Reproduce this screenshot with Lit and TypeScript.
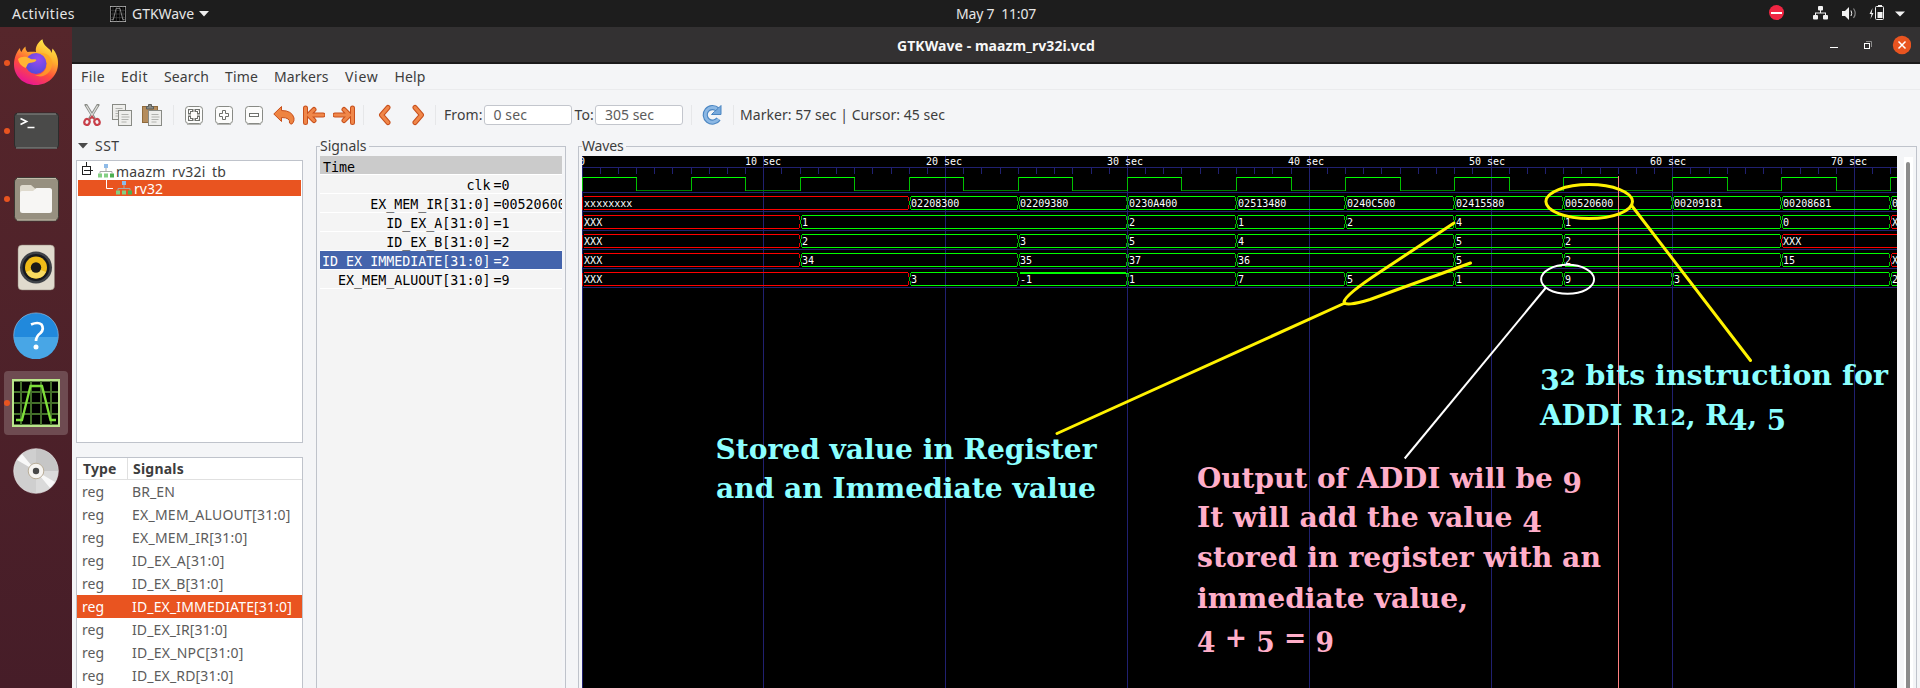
import { LitElement, html, svg, css } from "lit";
import { customElement, property } from "lit/decorators.js";

/* One line of text spread by letter-spacing over a given width. */
@customElement("fit-text")
class FitText extends LitElement {
  @property({ type: Number }) w = 0;
  static styles = css`
    :host { display: inline-block; white-space: pre; flex: none; line-height: 20px; }
    span { display: inline-block; white-space: pre; }
  `;
  firstUpdated() {
    const s = this.renderRoot.querySelector("span") as HTMLElement;
    const n = (this.textContent || "").length;
    if (!this.w || !n) return;
    const natural = s.getBoundingClientRect().width;
    s.style.letterSpacing = (this.w - natural) / n + "px";
  }
  render() { return html`<span><slot></slot></span>`; }
}

const PX = 18.18;
const X0 = 0.5;
const at = (t: number) => Math.floor(t * PX) + X0;

type Seg = [number, string];
const buses: Seg[][] = [
  [[0, "xxxxxxxx"], [18, "02208300"], [24, "02209380"], [30, "0230A400"], [36, "02513480"], [42, "0240C500"], [48, "02415580"], [54, "00520600"], [60, "00209181"], [66, "00208681"], [72, "0"]],
  [[0, "XXX"], [12, "1"], [30, "2"], [36, "1"], [42, "2"], [48, "4"], [54, "1"], [66, "0"], [72, "X"]],
  [[0, "XXX"], [12, "2"], [24, "3"], [30, "5"], [36, "4"], [48, "5"], [54, "2"], [66, "XXX"]],
  [[0, "XXX"], [12, "34"], [24, "35"], [30, "37"], [36, "36"], [48, "5"], [54, "2"], [66, "15"], [72, "X"]],
  [[0, "XXX"], [18, "3"], [24, "-1"], [30, "1"], [36, "7"], [42, "5"], [48, "1"], [54, "9"], [60, "3"], [72, "2"]],
];

const signals: [string, string][] = [
  ["clk", "=0"],
  ["EX_MEM_IR[31:0]", "=00520600"],
  ["ID_EX_A[31:0]", "=1"],
  ["ID_EX_B[31:0]", "=2"],
  ["ID_EX_IMMEDIATE[31:0]", "=2"],
  ["EX_MEM_ALUOUT[31:0]", "=9"],
];

const regs: [string, number][] = [
  ["BR_EN", 43], ["EX_MEM_ALUOUT[31:0]", 158.5], ["EX_MEM_IR[31:0]", 115.5], ["ID_EX_A[31:0]", 92.5],
  ["ID_EX_B[31:0]", 91.5], ["ID_EX_IMMEDIATE[31:0]", 160], ["ID_EX_IR[31:0]", 95.5],
  ["ID_EX_NPC[31:0]", 111.5], ["ID_EX_RD[31:0]", 101.5],
];

const menus: [string, number, number][] = [
  ["File", 24, 16], ["Edit", 27, 16], ["Search", 45, 16], ["Time", 33, 16], ["Markers", 54.5, 16.5], ["View", 33.5, 16], ["Help", 31, 0],
];

@customElement("wave-view")
class WaveView extends LitElement {
  static styles = css`
    :host { display: block; width: 1315px; height: 532px; background: #000; overflow: hidden; }
    svg { display: block; }
    .crisp { shape-rendering: crispEdges; }
    .grid { stroke: #202070; fill: none; }
    .hi { stroke: #00ff00; fill: none; }
    .edge { stroke: #00c000; fill: none; }
    .lo { stroke: #008000; fill: none; }
    .bad { stroke: #ff0000; fill: none; }
    .badedge { stroke: #e00000; fill: none; }
    .val { font: 10px "DejaVu Sans Mono", monospace; fill: #fff; white-space: pre; }
    .marker { stroke: #ff8080; }
    .y { fill: none; stroke: #fff200; stroke-width: 3; stroke-linecap: round; stroke-linejoin: round; }
    .w { fill: none; stroke: #fff; stroke-width: 2; }
    .note { font: bold 28px "DejaVu Serif Condensed", "DejaVu Serif", serif; font-stretch: condensed; white-space: pre; }
    .small { font-size: 22.500px; }
    .cyan { fill: #8cffff; }
    .pink { fill: #ffaec9; }
  `;

  grid() {
    const tens = [0, 10, 20, 30, 40, 50, 60, 70];
    const ticks = Array.from({ length: 73 }, (_, i) => i);
    return svg`
      <path class="grid" d=${"M0 11.5H1315" + ticks.map(t => `M${at(t)} 11V18`).join("")}/>
      <path class="grid" d=${tens.map(t => `M${at(t)} 0V532`).join("")}/>
      <path class="grid" d=${[0, 1, 2, 3, 4, 5].map(i => `M0 ${36.5 + 19 * i}H1315`).join("")}/>`;
  }

  clock() {
    let hi = "", lo = "", edge = "M0.5 21V35";
    for (let t = 0; t < 73; t += 6) {
      hi += `M${at(t)} 21.5H${at(t + 3) + 0.5}`;
      lo += `M${at(t + 3)} 34.5H${at(t + 6)}`;
      edge += `M${at(t)} 21V35M${at(t + 3)} 21V35`;
    }
    return svg`<path class="lo" d=${lo}/><path class="edge" d=${edge}/><path class="hi" d=${hi}/>`;
  }

  bus(segs: Seg[], row: number) {
    const y1 = 40.5 + row * 19, y2 = y1 + 13, m = y1 + 6.5;
    return segs.map(([t, v], i) => {
      const a = at(t), b = i + 1 < segs.length ? at(segs[i + 1][0]) : 1330;
      const bad = /^x/i.test(v), neg = v[0] === "-";
      const left = i === 0 ? `M${a} ${y1}V${y2}` : neg ? "" : `M${a + 1.6} ${y1}L${a} ${m}L${a + 1.6} ${y2}`;
      const right = `M${b - 1.6} ${y1}L${b} ${m}L${b - 1.6} ${y2}`;
      return svg`
        <path class=${bad ? "badedge" : "edge"} d=${left + right}/>
        <path class=${bad ? "bad" : "hi"} d=${`M${a + 1.5} ${y1}H${b - 1.5}M${a + 1.5} ${y2}H${b - 1.5}`}/>
        ${neg ? svg`<path class="hi" d=${`M${a + 1} ${y1 + 1}H${b}`}/>` : ""}
        <text class="val" x=${a + 1.6} y=${y1 + 10.5}>${v}</text>`;
    });
  }

  /* Old-style figures: 3, 4, 5, 9 hang below the baseline, 1 and 2 sit at x-height. */
  note(x: number, y: number, len: number, text: string, color: string) {
    let shift = 0;
    return svg`<text class=${"note " + color} x=${x} y=${y} textLength=${len} lengthAdjust="spacingAndGlyphs">${text.split(/([3459]|[12]+)/).filter(Boolean).map(p => {
      const want = /^[3459]$/.test(p) ? 5 : 0;
      const dy = want - shift;
      shift = want;
      return svg`<tspan class=${/^[12]+$/.test(p) ? "small" : ""} dy=${dy}>${p}</tspan>`;
    })}</text>`;
  }

  render() {
    return html`<svg width="1315" height="532" viewBox="0 0 1315 532">
      <g class="crisp">${this.grid()}${this.clock()}</g>
      ${[0, 10, 20, 30, 40, 50, 60, 70].map(t => svg`<text class="val" x=${t ? Math.round(163 + 18.1 * (t - 10)) : -3} y="9">${t ? t + " sec" : "0"}</text>`)}
      <g class="crisp">${buses.map((b, i) => this.bus(b, i))}
        <path class="marker" d="M1036.5 20V532"/></g>
      <g transform="translate(-582 -156)">
        <path class="y" d="M1454 223L1380 272Q1345 295 1344 302Q1345 307 1370 299.500L1470.500 263M1345 303L1057 433.500"/>
        <ellipse class="y" cx="1589.200" cy="201.600" rx="43.300" ry="17"/>
        <path class="y" d="M1632 206L1750.500 360.500"/>
        <ellipse class="w" cx="1567.600" cy="279.300" rx="26.500" ry="14.500"/>
        <path class="w" d="M1546 287.500L1404.700 458.500"/>
        ${this.note(715.5, 458.5, 381, "Stored value in Register", "cyan")}
        ${this.note(716, 497.5, 380, "and an Immediate value", "cyan")}
        ${this.note(1540, 385, 348, "32 bits instruction for", "cyan")}
        ${this.note(1540, 424.5, 246, "ADDI R12, R4, 5", "cyan")}
        ${this.note(1197, 487.5, 385, "Output of ADDI will be 9", "pink")}
        ${this.note(1197, 526.5, 345, "It will add the value 4", "pink")}
        ${this.note(1197, 566.5, 404, "stored in register with an", "pink")}
        ${this.note(1197, 607.5, 271, "immediate value,", "pink")}
        ${this.note(1197, 647, 137, "4 + 5 = 9", "pink")}
      </g>
    </svg>`;
  }
}

const firefox = svg`
  <defs>
    <linearGradient id="ff" x1=".8" y1="0" x2=".3" y2="1"><stop offset="0" stop-color="#fff44f"/><stop offset=".35" stop-color="#ffb02e"/><stop offset=".65" stop-color="#ff4f3b"/><stop offset="1" stop-color="#e8129a"/></linearGradient>
    <radialGradient id="fp" cx=".6" cy=".3" r=".8"><stop offset="0" stop-color="#9a4bf0"/><stop offset="1" stop-color="#4a4ad8"/></radialGradient>
  </defs>
  <path fill="url(#ff)" d="M24 46C11 46 2 37 2 25.500C2 19 4.500 13 8 9C8 11 8.500 12 9.500 13C10.500 10.500 11.500 9 13.500 7.500C13.500 10 14 11.500 15.500 13C19 12.500 22 12.500 24 13C23 8 26 3 30.500 0.300C31 5 34 7.500 37 10C38.500 11 39 12.500 39.500 14L40.500 9.500C44.500 14 46.500 19.500 46 25.500C45.500 37 36 46 24 46Z"/>
  <circle cx="24" cy="24.500" r="10.500" fill="url(#fp)"/>
  <path fill="#ffb534" d="M6 20C9 17.500 14 17 18 19.500C20 21 23 19.500 24.500 21C23.500 23.500 19 23.500 17.500 24C15 24.500 15.500 27 13.500 29C9 27 6.500 24 6 20Z"/>
  <path fill="#ffa526" d="M27 14C33 16 36.500 22 34.500 28C33 33 28 36.500 23 36C30 40 39 35 40 26C41 19 36 13 27 14Z" opacity=".75"/>`;
const terminal = svg`
  <rect x="2.500" y="6" width="44" height="35.500" rx="3.500" fill="#4a4a49" stroke="#2c2c2c"/>
  <path d="M5 7H44" stroke="#8a8a88"/><path d="M4 41H45" stroke="#8c8c8a"/>
  <path d="M8.500 11.500L14.500 14.500L8.500 17.500M15.500 20.500H22.500" stroke="#fff" stroke-width="1.700" fill="none"/>`;
const files = svg`
  <rect x="2.500" y="2.500" width="44" height="43.500" rx="4.500" fill="#979080" stroke="#3d3934"/>
  <path d="M5 3.500H44M5 45H44" stroke="#c2bba9"/>
  <path d="M8 14V12.500Q8 10 10.500 10H19L23 13.500H37V20H8Z" fill="#dfdacd"/>
  <path d="M8 18Q8 16 10 16H21L24.500 13H37.500Q40 13 40 15.500V36Q40 38 37.500 38H10.500Q8 38 8 36Z" fill="#f7f6f4"/>`;
const speaker = svg`
  <rect x="6" y="2" width="36.500" height="45" rx="4" fill="#e0dacd" stroke="#8a7f74" stroke-width=".5"/>
  <circle cx="24" cy="24.500" r="16" fill="#3f4247"/><circle cx="24" cy="24.500" r="13.500" fill="#17191f"/>
  <circle cx="24" cy="24.500" r="11" fill="#efbb18"/><path d="M14 29A11 11 0 0 0 34 29L24 25Z" fill="#f8da60"/>
  <circle cx="24" cy="24.500" r="5.200" fill="#1b1a18"/>`;
const help = svg`
  <circle cx="24" cy="24.200" r="22.300" fill="#2189dc" stroke="#9bc9ec" stroke-width=".6"/>
  <path d="M1.700 26A22.300 22.300 0 0 0 46.300 26Z" fill="#48a6e6"/>
  <path d="M19 13.500Q26 10.500 29.500 13.500Q32.500 18 28.500 22Q24 25.500 24 30" fill="none" stroke="#fff" stroke-width="2.700"/>
  <circle cx="24" cy="36" r="2.500" fill="#fff"/>`;
const gtk = (c: string, g: string, b: string) => svg`
  <rect width="48" height="48" fill=${b}/><rect x="2" y="2.500" width="44" height="43" fill="#000"/>
  <path d="M9 2V46M19 2V46M29 2V46M39 2V46M2 13H46M2 24H46M2 35H46" stroke=${g} stroke-width="2"/>
  <path d="M4 41H10L18.500 7H30L38.500 41H44" fill="none" stroke=${c} stroke-width="2.300"/>`;
const disc = svg`
  <circle cx="24" cy="24" r="22.300" fill="#cfcfcf" stroke="#f0f0f0" stroke-width=".6"/>
  <path d="M24 24V2A22 22 0 0 1 46 24Z" fill="#c6c6c6"/><path d="M24 24L46 24A22 22 0 0 1 24 46Z" fill="#dadada"/>
  <path d="M24 24L5 13L10 7ZM24 24L43 35L38 41Z" fill="#f8f8f8"/>
  <circle cx="24" cy="24" r="7.800" fill="#f6f4f1" stroke="#b9ad98"/><circle cx="24" cy="24" r="3.200" fill="#484848"/>`;

const btn = svg`<rect x="2.500" y="2.500" width="17" height="17" rx="3" fill="#fcfcfb" stroke="#888a85"/><path d="M4 20.500H18" stroke="#b5b6b3"/>`;
const doc = (x: number, y: number) => svg`<rect x=${x} y=${y} width="13" height="15" fill="#eeeeec" stroke="#888a85"/><path d=${`M${x + 3} ${y + 4}h7M${x + 3} ${y + 6.500}h8M${x + 3} ${y + 9}h7M${x + 3} ${y + 11.500}h5`} stroke="#a9aaa8" stroke-width=".9"/>`;
const orange = (d: string) => svg`<path d=${d} fill="none" stroke="#c8501c" stroke-width="5" stroke-linejoin="round" stroke-linecap="round"/><path d=${d} fill="none" stroke="#f0874a" stroke-width="3" stroke-linejoin="round" stroke-linecap="round"/>`;

const tools = {
  cut: svg`<path d="M5 1L13 14M17 1L9 14" stroke="#888a85" stroke-width="3" stroke-linecap="round"/><path d="M5.300 1.500L12.500 13.500M16.700 1.500L9.500 13.500" stroke="#dcdddb" stroke-width="1.300"/><ellipse cx="6" cy="18" rx="2.600" ry="3" fill="none" stroke="#c8404a" stroke-width="2.200" transform="rotate(20 6 18)"/><ellipse cx="16" cy="18" rx="2.600" ry="3" fill="none" stroke="#c8404a" stroke-width="2.200" transform="rotate(-20 16 18)"/><path d="M9 15L11 12.500L13 15" stroke="#c8404a" stroke-width="2" fill="none"/>`,
  copy: svg`${doc(1.5, 0.5)}${doc(7.5, 6.5)}`,
  paste: svg`<rect x="1.500" y="2.500" width="15" height="16" fill="#b58c5c" stroke="#8f6a3c"/><path d="M5.500 5V2.500H7.500V.5H10.500V2.500H12.500V5Z" fill="#888a85" stroke="#5c5e5a"/>${doc(7.5, 6.5)}`,
  fit: svg`${btn}<path d="M6.500 9V6.500H9M13 6.500H15.500V9M15.500 13V15.500H13M9 15.500H6.500V13" fill="none" stroke="#6e706c" stroke-width="3" stroke-linecap="square"/><path d="M6.500 9V6.500H9M13 6.500H15.500V9M15.500 13V15.500H13M9 15.500H6.500V13" fill="none" stroke="#fff" stroke-width="1"/>`,
  plus: svg`${btn}<path d="M9.500 6.500H12.500V9.500H15.500V12.500H12.500V15.500H9.500V12.500H6.500V9.500H9.500Z" fill="#fff" stroke="#6e706c"/>`,
  minus: svg`${btn}<rect x="6.500" y="9.500" width="9" height="3" fill="#fff" stroke="#6e706c"/>`,
  undo: svg`<path d="M0.800 10L8.500 2.500V6.500Q19 6.500 21 14Q21.500 17 19.500 19.500Q18 21 16.500 19Q17.500 13.500 8.500 13.500V17.500Z" fill="#ee8442" stroke="#c8501c" stroke-linejoin="round"/>`,
  first: orange("M2.500 4V18.500M20 11H6M11 5.500L5.500 11L11 16.500"),
  last: orange("M19.500 4V18.500M2 11H16M11 5.500L16.500 11L11 16.500"),
  prev: orange("M14 3.500L7.500 11L14 18.500"),
  next: orange("M8 3.500L14.500 11L8 18.500"),
  reload: svg`<path d="M16.500 5.500A7.300 7.300 0 1 0 17.500 15" fill="none" stroke="#4b86c2" stroke-width="5.200"/><path d="M16.500 5.500A7.300 7.300 0 1 0 17.500 15" fill="none" stroke="#8cb8e4" stroke-width="3"/><path d="M20 1.500V10.500H10.500L13.500 7.500L17 4.500Z" fill="#79aadc" stroke="#4b86c2"/>`,
};
const tool = (k: keyof typeof tools, cls = "") => html`<span class="tool ${cls}"><svg width="22" height="22" viewBox="0 0 22 22" fill="none">${tools[k]}</svg></span>`;

const hier = html`<svg width="16" height="14" viewBox="0 0 16 14"><path d="M8 4V7M2 9.500V7.500H14V9.500" fill="none" stroke="#a8aaa8"/><rect x="6" y="0" width="4" height="4" fill="#8fbbe8"/><rect x="0" y="9.500" width="4" height="4" fill="#84cf84"/><rect x="6" y="9.500" width="4" height="4" fill="#84cf84"/><rect x="12" y="9.500" width="4" height="4" fill="#4caf50"/></svg>`;

@customElement("app-root")
class AppRoot extends LitElement {
  static styles = css`
    :host { display: flex; flex-direction: column; width: 1920px; height: 688px; overflow: hidden; font: 14px "Noto Sans", "Open Sans", sans-serif; color: #3d3d3d; background: #f4f5f7; }
    * { box-sizing: border-box; }
    svg { display: block; flex: none; }
    .top { display: grid; grid-template-columns: 956px 1fr auto; align-items: center; height: 27px; background: #1d1d1d; color: #e6e6e6; flex: none; }
    .topleft { display: flex; align-items: center; padding-left: 12px; }
    .app { display: flex; align-items: center; gap: 6px; margin-left: 35px; }
    .app svg:last-child { margin-left: -1px; }
    .tray { display: flex; align-items: center; padding: 0 15px 1px 0; }
    .below { display: flex; flex: 1; min-height: 0; }
    .dock { width: 72px; flex: none; padding-top: 2px; background: linear-gradient(#56262b, #461d28); display: flex; flex-direction: column; }
    .launch { position: relative; height: 68px; flex: none; display: flex; align-items: center; justify-content: center; }
    .launch.on::before { content: ""; position: absolute; left: 4px; top: 2px; width: 64px; height: 64px; border-radius: 4px; background: #6e4b51; }
    .launch svg { position: relative; }
    .launch.run::after { content: ""; position: absolute; left: 4px; top: 31px; width: 6px; height: 6px; border-radius: 50%; background: #e95420; }
    .window { flex: 1; min-width: 0; display: flex; flex-direction: column; background: #f4f5f7; }
    .title { height: 37px; flex: none; display: grid; grid-template-columns: 825px 1fr auto; align-items: center; background: #333132; border-bottom: 2px solid #1b1a1a; color: #f7f7f7; font-weight: 700; }
    .title fit-text { padding-top: 2px; }
    .ctl { display: flex; align-items: center; padding-right: 9px; }
    .menu { display: flex; align-items: center; height: 26px; flex: none; padding: 1px 0 0 9px; border-bottom: 1px solid #eaebed; }
    .tools { display: flex; align-items: center; height: 46px; flex: none; padding: 4px 0 0 5px; }
    .tool { width: 30px; display: flex; justify-content: center; flex: none; }
    .tool.wide { width: 33px; }
    .sep { width: 1px; height: 20px; background: #e6e7e9; margin: 0 5px 0 6px; flex: none; }
    .field { width: 88px; height: 20px; border: 1px solid #c3c6cd; border-radius: 3px; background: #fff; display: flex; align-items: center; padding-left: 9px; color: #5c5c5c; margin: 0 3px 0 1px; flex: none; }
    .main { display: flex; flex: 1; min-height: 0; }
    .left { width: 244px; flex: none; padding-left: 4px; display: flex; flex-direction: column; }
    .sst { height: 24px; flex: none; display: flex; align-items: center; gap: 7px; padding: 0 0 5px 2px; }
    .box { width: 227px; background: #fff; border: 1px solid #bfc3cb; flex: none; }
    .tree { height: 283px; padding: 1px; border-width: 1px; }
    .node { display: flex; height: 18px; padding-left: 4px; }
    .node fit-text { height: 16px; clip-path: inset(0 0 0 0); }
    .node.sel { height: 16px; background: #e95420; color: #fff; padding-left: 27px; }
    .node.sel fit-text { margin-top: -1px; height: 18px; }
    .list { margin-top: 14px; height: 260px; color: #5c5c5c; }
    .lrow { display: grid; grid-template-columns: 50px 1fr; height: 23px; align-items: center; padding-left: 5px; }
    .lrow.head { height: 22px; font-weight: 700; color: #3d3d3d; border-bottom: 1px solid #e0e0e0; grid-template-columns: 44px 1fr; padding-left: 6px; }
    .head > fit-text { padding-top: 1px; }
    .head .c2 { border-left: 1px solid #e0e0e0; padding: 1px 0 0 5px; height: 21px; }
    .lrow.sel { background: #e95420; color: #fff; }
    fieldset { margin: 0; padding: 0 0 0 3px; border: 1px solid #bfc3cb; border-bottom: 0; min-width: 0; height: 560px; flex: none; }
    legend { padding: 0 2px 0 0; height: 20px; }
    legend fit-text { line-height: 18px; }
    .fs1 { width: 250px; }
    .fs2 { width: 1339px; margin-left: 12px; }
    .names { width: 242px; font: 13.330px "DejaVu Sans Mono", monospace; color: #000; background: #f4f4f4; height: 532px; overflow: hidden; }
    .time { height: 18px; background: #cbcbcb; padding-left: 3px; line-height: 23px; }
    .srow { display: grid; grid-template-columns: 170.500px 1fr; gap: 3px; height: 19px; border-top: 1px solid #fff; line-height: 21px; white-space: pre; }
    .srow span:first-child { text-align: right; display: flex; justify-content: flex-end; }
    .srow.sel { background: #4464ac; color: #fff; }
    .end { border-top: 1px solid #fff; }
    .waves { display: flex; gap: 7px; }
    .bar { width: 9px; height: 532px; background: #fff; padding: 5px 3px 0 2px; margin-top: 1px; }
    .thumb { height: 527px; background: #8b8b8b; border-radius: 2px 2px 0 0; }
  `;

  render() {
    const launch = (icon: unknown, cls = "") => html`<div class="launch ${cls}"><svg width="48" height="48" viewBox="0 0 48 48">${icon}</svg></div>`;
    return html`
      <div class="top">
        <div class="topleft"><fit-text w="63">Activities</fit-text>
          <div class="app"><svg width="16" height="16" viewBox="0 0 48 48">${gtk("#aaa", "#444", "#bbb")}</svg><fit-text w="62">GTKWave</fit-text>
            <svg width="10" height="6" viewBox="0 0 10 6"><path d="M0 0H10L5 5.500Z" fill="#eee"/></svg></div></div>
        <fit-text w="80">May 7  11:07</fit-text>
        <div class="tray">
          <svg width="152" height="20" viewBox="0 0 152 20">
            <circle cx="23.500" cy="9.500" r="7.500" fill="#f02542"/><rect x="18" y="9" width="11" height="2" fill="#fff"/>
            <g fill="#f2f2f2"><rect x="65" y="3" width="5" height="4.500" rx="1"/><rect x="60" y="12" width="5" height="4.500" rx="1"/><rect x="70" y="12" width="5" height="4.500" rx="1"/>
            <path d="M67 7H68V9.500H73V12H72V10.500H63V12H62V9.500H67Z"/>
            <path d="M89 8H92L96 4V17L92 13H89Z"/><path d="M119.500 5L116.500 11H118.500L117.500 16L120.500 10H118.700Z"/><path d="M125 2H129V4H125Z"/><rect x="124.500" y="9" width="5" height="6"/></g>
            <path d="M98 7.500Q99.500 10.300 98 13" fill="none" stroke="#f2f2f2"/><path d="M100.500 5.500Q104 10.300 100.500 15" fill="none" stroke="#888" stroke-width="1.200"/>
            <rect x="122.500" y="3.500" width="8" height="13" rx="1" fill="none" stroke="#f2f2f2"/>
            <path d="M142 8.500H152L147 13.500Z" fill="#f2f2f2"/>
          </svg>
        </div>
      </div>
      <div class="below">
        <div class="dock">
          ${launch(firefox, "run")}${launch(terminal, "run")}${launch(files, "run")}${launch(speaker)}${launch(help)}${launch(gtk("#7fe03a", "#44702a", "#b9e68a"), "run on")}${launch(disc)}
        </div>
        <div class="window">
          <div class="title"><span></span><fit-text w="198">GTKWave - maazm_rv32i.vcd</fit-text>
            <div class="ctl"><svg width="82" height="20" viewBox="0 0 82 20">
              <rect x="1" y="12" width="8" height="1" fill="#fff"/>
              <rect x="35.500" y="8.500" width="5" height="5" fill="none" stroke="#fff"/><path d="M37 6.500H42.500V12" fill="none" stroke="#8d8c8c"/>
              <circle cx="73" cy="10" r="9.200" fill="#e95420"/><path d="M69.500 6.500L76.500 13.500M76.500 6.500L69.500 13.500" stroke="#fff" stroke-width="1.500"/>
            </svg></div></div>
          <div class="menu">${menus.map(([t, w, g]) => html`<fit-text w=${w} style="margin-right:${g}px">${t}</fit-text>`)}</div>
          <div class="tools">
            ${tool("cut")}${tool("copy")}${tool("paste")}<i class="sep"></i>
            ${tool("fit")}${tool("plus")}${tool("minus")}${tool("undo")}${tool("first")}${tool("last")}<i class="sep" style="margin:0 4px"></i>
            ${tool("prev", "wide")}${tool("next", "wide")}<i class="sep" style="margin:0 8px 0 1px"></i>
            <fit-text w="38.500">From:</fit-text><div class="field"><fit-text w="33.500">0 sec</fit-text></div>
            <fit-text w="19.500">To:</fit-text><div class="field"><fit-text w="49">305 sec</fit-text></div><i class="sep" style="margin:0 5px"></i>
            ${tool("reload")}<i class="sep" style="margin:0 6px"></i><fit-text w="205">Marker: 57 sec | Cursor: 45 sec</fit-text>
          </div>
          <div class="main">
            <div class="left">
              <div class="sst"><svg width="10" height="6" viewBox="0 0 10 6"><path d="M0 0H10L5 5.500Z" fill="#4a4a4a"/></svg><fit-text w="24.500">SST</fit-text></div>
              <div class="box tree">
                <div class="node"><svg width="14" height="18" viewBox="0 0 14 18"><rect x=".5" y="4.500" width="8" height="8" fill="#fff" stroke="#222"/><path d="M4.500 0V4M2 8.500H11" stroke="#222"/></svg>
                  <svg width="2" height="2"></svg><svg width="16" height="18" viewBox="0 -2 16 18" >${hier}</svg><svg width="2" height="2"></svg><fit-text w="110">maazm_rv32i_tb</fit-text></div>
                <div class="node sel"><svg width="9" height="16" viewBox="0 0 9 16"><path d="M1.500 0V8.500H8" fill="none" stroke="#fff"/></svg>
                  <svg width="18" height="16" viewBox="-2 -1 18 16">${hier}</svg><svg width="2" height="2"></svg><fit-text w="29">rv32</fit-text></div>
              </div>
              <div class="box list">
                <div class="lrow head"><fit-text w="33.500">Type</fit-text><div class="c2"><fit-text w="51">Signals</fit-text></div></div>
                ${regs.map(([n, w], i) => html`<div class="lrow ${i === 5 ? "sel" : ""}"><fit-text w="22">reg</fit-text><fit-text w=${w}>${n}</fit-text></div>`)}
              </div>
            </div>
            <fieldset class="fs1"><legend><fit-text w="46.500">Signals</fit-text></legend>
              <div class="names"><div class="time">Time</div>
                ${signals.map(([n, v], i) => html`<div class="srow ${i === 4 ? "sel" : ""}"><span>${n}</span><span>${v}</span></div>`)}
                <div class="end"></div></div>
            </fieldset>
            <fieldset class="fs2"><legend><fit-text w="41.500">Waves</fit-text></legend>
              <div class="waves"><wave-view></wave-view><div class="bar"><div class="thumb"></div></div></div>
            </fieldset>
          </div>
        </div>
      </div>`;
  }
}
